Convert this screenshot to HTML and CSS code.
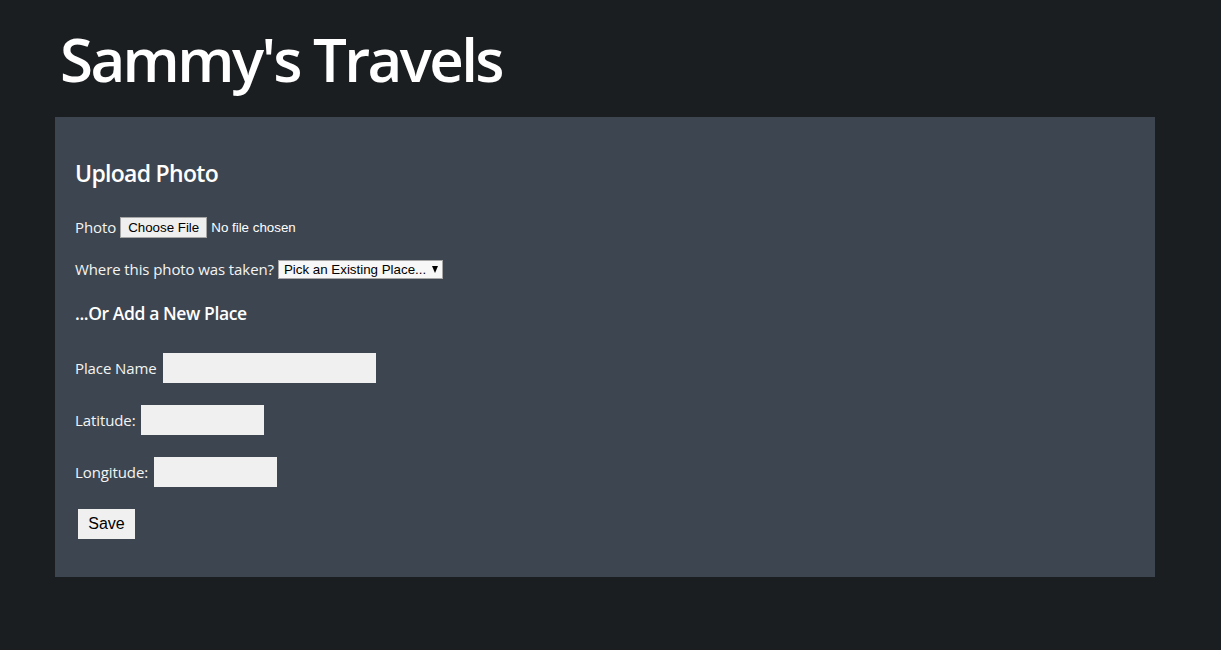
FILE: index.html
```html
<!DOCTYPE html>
<html lang="en">
<head>
<meta charset="utf-8">
<title>Sammy's Travels</title>
<link rel="stylesheet" href="styles.css">
</head>
<body>
<header class="site-header">
  <h1 class="site-title">Sammy's Travels</h1>
</header>
<main class="panel">
  <h2 class="panel-title">Upload Photo</h2>
  <form class="upload-form">
    <div class="row row-photo">
      <label class="label" for="photo">Photo</label>
      <input class="file-input" id="photo" type="file">
    </div>
    <div class="row row-select">
      <label class="label" for="place">Where this photo was taken?</label>
      <span class="select-wrap">
        <select class="select" id="place">
          <option>Pick an Existing Place...</option>
        </select>
      </span>
    </div>
    <h3 class="sub-title">...Or Add a New Place</h3>
    <div class="row row-field row-first">
      <label class="label" for="name">Place Name</label>
      <input class="text-input wide" id="name" type="text">
    </div>
    <div class="row row-field">
      <label class="label" for="lat">Latitude:</label>
      <input class="text-input" id="lat" type="text">
    </div>
    <div class="row row-field">
      <label class="label" for="lng">Longitude:</label>
      <input class="text-input" id="lng" type="text">
    </div>
    <div class="row row-save">
      <button class="save-btn" type="button">Save</button>
    </div>
  </form>
</main>
</body>
</html>
```
FILE: styles.css
```css
html, body {
  margin: 0;
  padding: 0;
}
body {
  background: #1b1e21;
  color: #f4f4f4;
  font-family: "Open Sans", "Noto Sans", sans-serif;
  height: 650px;
  overflow: hidden;
}
.site-header {
  padding: 0 0 0 60px;
  height: 117px;
  display: flex;
  align-items: flex-start;
}
.site-title {
  margin: 21px 0 0 0;
  font-size: 60px;
  line-height: 76px;
  font-weight: 600;
  letter-spacing: -2.6px;
  color: #ffffff;
}
.panel {
  margin-left: 55px;
  width: 1100px;
  box-sizing: border-box;
  background: #3d4650;
  padding: 22px 20px 38px 20px;
}
.panel-title {
  margin: 19px 0 0 0;
  font-size: 23px;
  line-height: 30px;
  font-weight: 600;
  letter-spacing: -0.7px;
  color: #ffffff;
}
.upload-form {
  display: flex;
  flex-direction: column;
  align-items: flex-start;
}
.row {
  display: flex;
  align-items: center;
}
.label {
  font-size: 15px;
  letter-spacing: -0.1px;
  color: #f4f4f4;
}
.row-photo {
  margin-top: 28px;
  height: 22px;
}
.row-select {
  margin-top: 20px;
  height: 22px;
}
.file-input {
  margin-left: 4px;
  font-family: "Liberation Sans", Arial, sans-serif;
  font-size: 13.33px;
  color: #ffffff;
}
.file-input::file-selector-button {
  font-family: "Liberation Sans", Arial, sans-serif;
  font-size: 13.33px;
  background: #efefef;
  color: #000;
  border: 1px solid #a6a6a6;
  border-radius: 0;
  padding: 1px 7px;
  height: 21px;
  margin-right: 4px;
}
.select-wrap {
  position: relative;
  margin-left: 4px;
  display: inline-block;
}
.select {
  appearance: none;
  -webkit-appearance: none;
  font-family: "Liberation Sans", Arial, sans-serif;
  font-size: 13.33px;
  background: #f7f7f7;
  color: #000;
  border: 1px solid #a6a6a6;
  border-radius: 0;
  width: 165px;
  height: 19px;
  padding: 0 16px 0 5px;
  margin: 0;
  display: block;
}
.select-wrap::after {
  content: "";
  position: absolute;
  right: 5px;
  top: 6px;
  border-left: 3.5px solid transparent;
  border-right: 3.5px solid transparent;
  border-top: 7px solid #000;
  pointer-events: none;
}
.sub-title {
  margin: 21px 0 0 0;
  font-size: 17.5px;
  line-height: 24px;
  font-weight: 600;
  letter-spacing: -0.4px;
  color: #ffffff;
}
.row-field {
  margin-top: 22px;
  height: 30px;
}
.row-first {
  margin-top: 28px;
}
.text-input {
  margin-left: 6px;
  width: 123px;
  height: 30px;
  box-sizing: border-box;
  border: none;
  background: #f0f0f0;
  padding: 0 4px;
}
.text-input.wide {
  width: 213px;
}
.row-save {
  margin-top: 22px;
  margin-left: 3px;
}
.save-btn {
  font-family: "Liberation Sans", Arial, sans-serif;
  font-size: 16px;
  background: #f0f0f0;
  color: #000;
  border: none;
  border-radius: 0;
  width: 57px;
  height: 30px;
  padding: 0;
}
```
